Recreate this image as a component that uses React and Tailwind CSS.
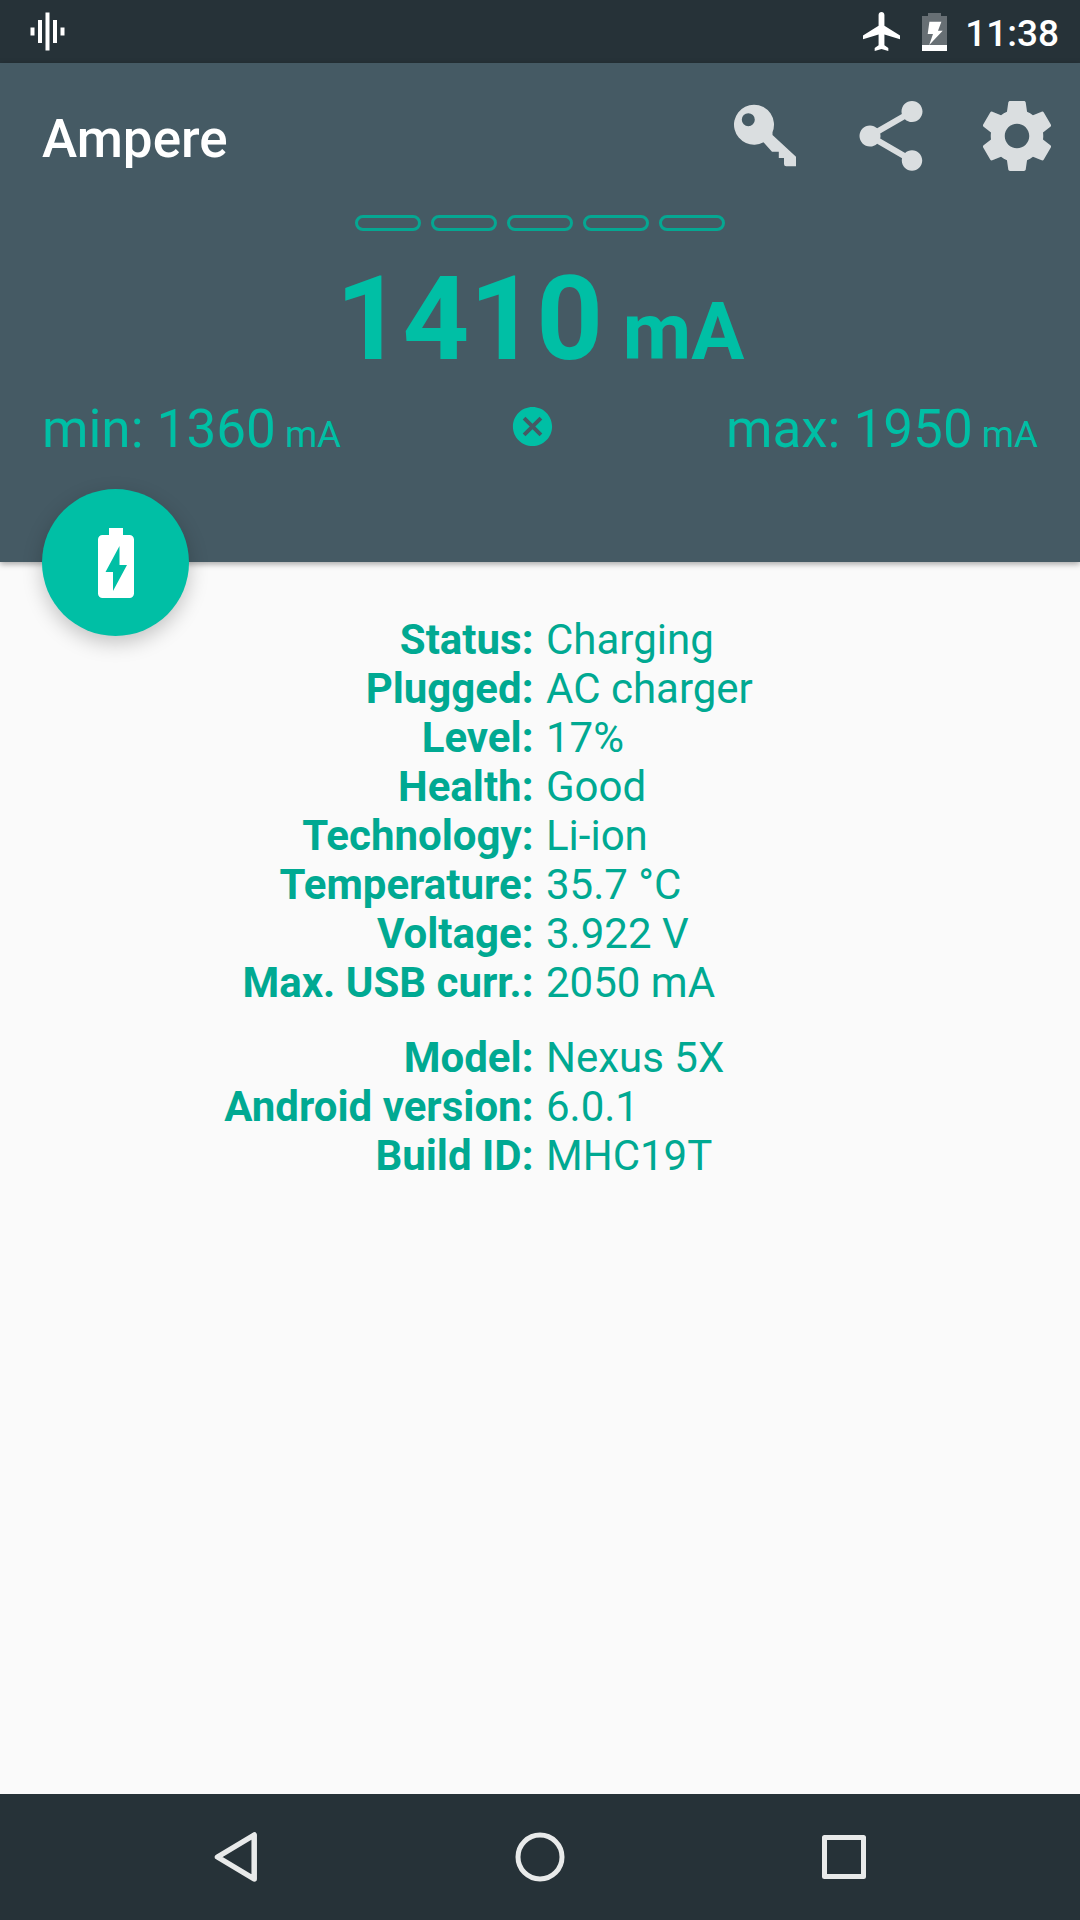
const battery = [
    ["Status", "Charging"],
    ["Plugged", "AC charger"],
    ["Level", "17%"],
    ["Health", "Good"],
    ["Technology", "Li-ion"],
    ["Temperature", "35.7 °C"],
    ["Voltage", "3.922 V"],
    ["Max. USB curr.", "2050 mA"],
];

const device = [
    ["Model", "Nexus 5X"],
    ["Android version", "6.0.1"],
    ["Build ID", "MHC19T"],
];

function StatusBar() {
    return (
        <div className="flex h-[63px] items-center justify-between bg-[#263238] pl-[30px] pr-[21px] text-white">
            <svg className="h-[39px] w-[35px]" viewBox="0 0 35 39" fill="currentColor">
                <rect x="0.5" y="15.5" width="4" height="8" />
                <rect x="8" y="8" width="4" height="23" />
                <rect x="15.5" y="0.5" width="4" height="38" />
                <rect x="23" y="8" width="4" height="23" />
                <rect x="30.5" y="15.5" width="4" height="8" />
            </svg>
            <div className="flex items-center">
                <svg className="mr-[22px] h-[39px] w-[37px]" viewBox="2.5 2 19 20" fill="currentColor">
                    <path d="M21.5 16v-2l-8-5V3.5c0-.83-.67-1.5-1.5-1.5s-1.5.67-1.5 1.5V9l-8 5v2l8-2.5V19l-2 1.5V22l3.5-1 3.5 1v-1.5L13.5 19v-5.5l8 2.5z" />
                </svg>
                <svg className="mr-[18px] h-[38px] w-[25px]" viewBox="0 0 25 38">
                    <path d="M0 3h6V0h13v3h6v29H0z" fill="#fff" fillOpacity="0.3" />
                    <path d="M0 32h25v6H0z" fill="#fff" />
                    <path d="M7.4 8.7h12l-3.4 9h4.7L7.2 32 11 21H5.7z" fill="#fff" />
                </svg>
                <span className="pt-[3px] text-[37px] font-medium leading-none">11:38</span>
            </div>
        </div>
    );
}

function Toolbar() {
    return (
        <div className="flex h-[146px] items-center justify-between pl-[42px] pr-[21px]">
            <h1 className="pt-[7px] text-[53px] font-medium leading-none text-white">Ampere</h1>
            <div className="flex gap-[42px] text-[#dadee0]">
                <svg className="size-[84px]" viewBox="0 0 84 84" fill="currentColor">
                    <path
                        fillRule="evenodd"
                        d="M31 10.7a20 20 0 1 0 9.5 37.6l8.5 9.4h6.800V64h5.200v6q0 2.300 2.300 2.300H73V62.700L49.500 41V38.300A20 20 0 0 0 31 10.700zm-5.700 8.500a6.500 6.500 0 1 1 0 13 6.500 6.500 0 0 1 0-13z"
                    />
                </svg>
                <svg className="size-[84px]" viewBox="0 0 24 24" fill="currentColor">
                    <path d="M18 16.080c-.76 0-1.440.3-1.960.77L8.910 12.700c.05-.23.09-.46.09-.7s-.04-.47-.09-.7l7.050-4.110c.54.5 1.250.81 2.040.81 1.660 0 3-1.340 3-3s-1.340-3-3-3-3 1.340-3 3c0 .24.04.47.09.7L8.040 9.810C7.500 9.310 6.790 9 6 9c-1.660 0-3 1.340-3 3s1.340 3 3 3c.79 0 1.500-.31 2.040-.81l7.120 4.160c-.05.21-.08.43-.08.65 0 1.610 1.310 2.920 2.920 2.920s2.920-1.310 2.920-2.920-1.310-2.920-2.920-2.920z" />
                </svg>
                <svg className="size-[84px]" viewBox="0 0 24 24" fill="currentColor">
                    <path d="M19.430 12.980c.04-.32.07-.64.07-.98s-.03-.66-.07-.98l2.110-1.650c.19-.15.24-.42.12-.64l-2-3.460c-.12-.22-.39-.3-.61-.22l-2.490 1c-.52-.4-1.080-.73-1.690-.98l-.38-2.650C14.460 2.180 14.250 2 14 2h-4c-.25 0-.46.18-.49.42l-.38 2.650c-.61.25-1.170.59-1.690.98l-2.490-1c-.23-.09-.49 0-.61.22l-2 3.460c-.13.22-.07.49.12.64l2.110 1.650c-.04.32-.07.65-.07.98s.03.66.07.98l-2.110 1.650c-.19.15-.24.42-.12.64l2 3.460c.12.22.39.3.61.22l2.490-1c.52.4 1.080.73 1.690.98l.38 2.650c.03.24.24.42.49.42h4c.25 0 .46-.18.49-.42l.38-2.650c.61-.25 1.170-.59 1.690-.98l2.490 1c.23.09.49 0 .61-.22l2-3.460c.12-.22.07-.49-.12-.64l-2.110-1.650zM12 15.500c-1.930 0-3.500-1.570-3.500-3.500s1.570-3.500 3.500-3.500 3.500 1.570 3.500 3.500-1.570 3.500-3.500 3.500z" />
                </svg>
            </div>
        </div>
    );
}

function Rows({ items }) {
    return (
        <dl>
            {items.map(([label, value]) => (
                <div key={label} className="grid h-[49px] grid-cols-[533.5px_1fr] items-center gap-[12.5px]">
                    <dt className="text-right font-bold">{label}:</dt>
                    <dd>{value}</dd>
                </div>
            ))}
        </dl>
    );
}

export default function App() {
    return (
        <div className="flex h-[1920px] w-[1080px] flex-col overflow-hidden bg-[#fafafa] font-['Roboto',sans-serif]">
            <StatusBar />

            <header className="relative h-[499px] bg-[#455a64] text-[#00bfa5] shadow-[0_2px_6px_rgba(0,0,0,0.35)]">
                <Toolbar />

                <div className="mt-[6px] flex justify-center gap-[10px]">
                    {[1, 2, 3, 4, 5].map((n) => (
                        <div key={n} className="h-[16px] w-[66px] rounded-full border-[3px] border-[#05a792]" />
                    ))}
                </div>

                {/* Current reading */}
                <div className="mt-[20px] flex h-[136px] items-baseline justify-center font-bold leading-[136px]">
                    <span className="text-[116.5px]">1410</span>
                    <span className="whitespace-pre text-[79px]"> mA</span>
                </div>

                <div className="mt-[11px] grid h-[62px] grid-cols-[1fr_47px_1fr] px-[42px] text-[53px] leading-[62px]">
                    <div>
                        min: 1360<span className="text-[36.75px]"> mA</span>
                    </div>
                    <svg className="-ml-[8px] mt-[5px] size-[47px]" viewBox="0 0 24 24" fill="currentColor">
                        <path d="M12 2C6.470 2 2 6.470 2 12s4.470 10 10 10 10-4.470 10-10S17.530 2 12 2zm5 13.590L15.590 17 12 13.410 8.410 17 7 15.590 10.590 12 7 8.410 8.410 7 12 10.590 15.590 7 17 8.410 13.410 12 17 15.590z" />
                    </svg>
                    <div className="text-right">
                        max: 1950<span className="text-[36.75px]"> mA</span>
                    </div>
                </div>

                {/* Floating battery button */}
                <button className="absolute -bottom-[74px] left-[42px] flex size-[147px] items-center justify-center rounded-full bg-[#00bfa5] shadow-[0_7px_20px_rgba(0,0,0,0.22)]">
                    <svg className="h-[70px] w-[36px]" viewBox="0 0 36 70" fill="#fff">
                        <path
                            fillRule="evenodd"
                            d="M11 0h14v7h6.500A4.500 4.500 0 0 1 36 11.500v54A4.500 4.500 0 0 1 31.500 70h-27A4.500 4.500 0 0 1 0 65.500v-54A4.500 4.500 0 0 1 4.500 7H11zm10.500 18L7.500 44H15v19l14-26h-7.500z"
                        />
                    </svg>
                </button>
            </header>

            <main className="flex flex-1 flex-col gap-[26px] pt-[53px] text-[42px] leading-[49px] text-[#00a992]">
                <Rows items={battery} />
                <Rows items={device} />
            </main>

            <nav className="h-[126px] bg-[#263238] px-[84px]">
                <div className="grid h-full grid-cols-3 place-items-center">
                    <svg className="size-[60px]" viewBox="0 0 60 60" fill="none" stroke="#e8eaea" strokeWidth="5.5" strokeLinejoin="round">
                        <path d="M48.200 8v44L11.500 30z" />
                    </svg>
                    <svg className="size-[60px]" viewBox="0 0 60 60" fill="none" stroke="#e8eaea" strokeWidth="5">
                        <circle cx="30" cy="30" r="22" />
                    </svg>
                    <svg className="size-[60px]" viewBox="0 0 60 60" fill="none" stroke="#e8eaea" strokeWidth="5" strokeLinejoin="round">
                        <rect x="10.500" y="10.500" width="39" height="39" />
                    </svg>
                </div>
            </nav>
        </div>
    );
}
